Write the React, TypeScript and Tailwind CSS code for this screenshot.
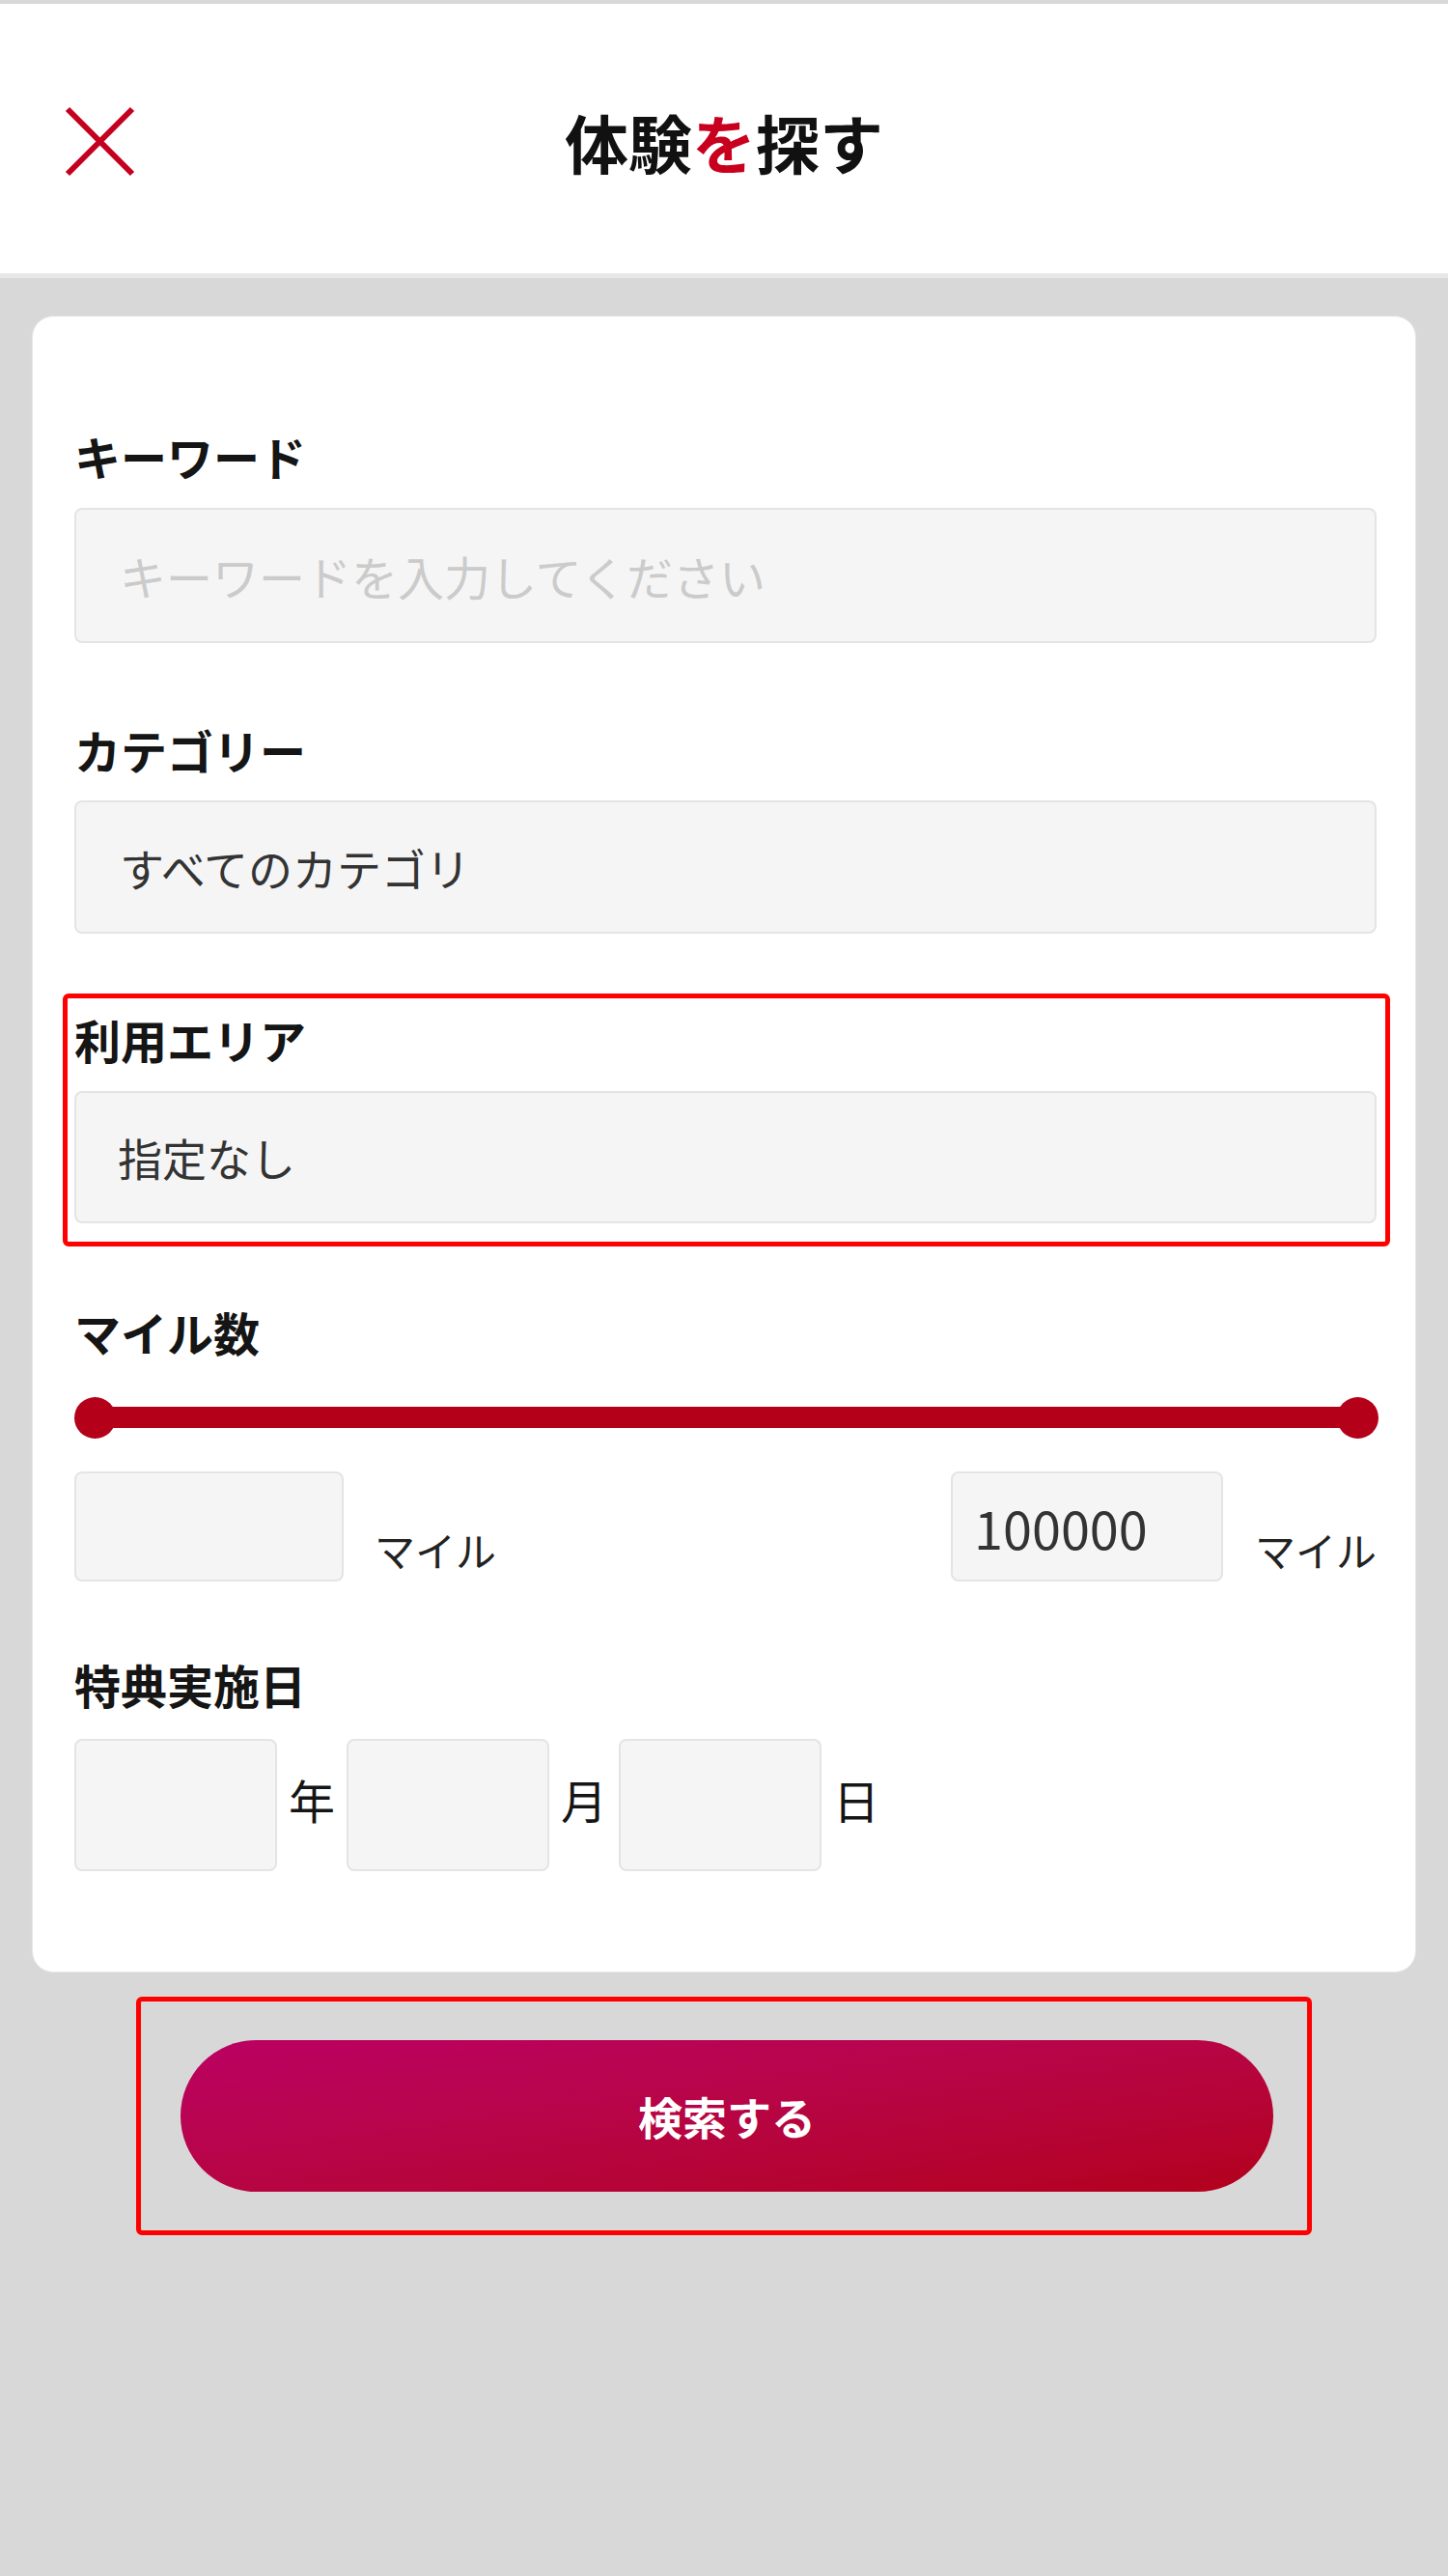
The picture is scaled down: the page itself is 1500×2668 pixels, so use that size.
import { useState } from "react";

const fieldBox =
  "bg-[#f5f5f5] border-2 border-[#e4e4e4] rounded-[8px] outline-none text-[#333] shrink-0";

function Label({ children }: { children: React.ReactNode }) {
  return (
    <div className="h-[60px] leading-[60px] text-[48px] font-bold text-[#151515] whitespace-nowrap">
      {children}
    </div>
  );
}

export default function App() {
  const [keyword, setKeyword] = useState("");
  const [minMile, setMinMile] = useState("");
  const [maxMile, setMaxMile] = useState("100000");

  return (
    <div className="min-h-[2668px] bg-[#d8d8d8] font-['Noto_Sans_CJK_JP','Noto_Sans',sans-serif] pb-[353px]">
      {/* header */}
      <header className="h-[288px] bg-white border-t-4 border-t-[#d8d8d8] border-b-[5px] border-b-[#e8e8e8] pt-[5px] grid grid-cols-[1fr_auto_1fr] items-center">
        <div>
          <button className="ml-[67px] w-[73px] h-[73px] flex" aria-label="閉じる">
            <svg viewBox="0 0 73 73" width="73" height="73">
              <path d="M3 3 L70 70 M70 3 L3 70" stroke="#c4001e" strokeWidth="6" fill="none" />
            </svg>
          </button>
        </div>
        <h1 className="text-[66px] leading-none font-bold text-[#111]">
          体験<span className="text-[#c8001e]">を</span>探す
        </h1>
        <div />
      </header>

      {/* form card */}
      <div className="mt-[39px] mx-[33px] rounded-[22px] bg-white border border-[#e6e6e6] pt-[114px] pl-[43px] pr-[40px] pb-[104px]">
        <Label>キーワード</Label>
        <input
          value={keyword}
          onChange={(e) => setKeyword(e.target.value)}
          placeholder="キーワードを入力してください"
          className={`${fieldBox} block w-full mt-[24px] h-[140px] pl-[45px] text-[48px] placeholder:text-[#cbcbcb]`}
        />

        <div className="mt-[80px]">
          <Label>カテゴリー</Label>
        </div>
        <select
          className={`${fieldBox} block w-full appearance-none mt-[23px] h-[138px] pl-[45px] text-[46px]`}
          defaultValue="all"
        >
          <option value="all">すべてのカテゴリ</option>
        </select>

        {/* highlighted area block */}
        <div className="mt-[62px] ml-[-12px] mr-[-14px] border-[5px] border-[#ff0000] rounded-[6px] pl-[7px] pr-[9px] pt-[12px] pb-[19px]">
          <Label>利用エリア</Label>
          <select
            className={`${fieldBox} block w-full appearance-none mt-[24px] h-[137px] pl-[43px] text-[46px]`}
            defaultValue="none"
          >
            <option value="none">指定なし</option>
          </select>
        </div>

        <div className="mt-[58px]">
          <Label>マイル数</Label>
        </div>

        {/* range slider */}
        <div className="mt-[37px] h-[44px] flex items-center">
          <div className="w-[43px] h-[43px] rounded-full bg-[#b5001a] shrink-0 z-10" />
          <div className="flex-1 h-[22px] bg-[#b5001a] -mx-[4px]" />
          <div className="w-[43px] h-[43px] rounded-full bg-[#b5001a] shrink-0 mr-[-2px] z-10" />
        </div>

        <div className="mt-[34px] flex justify-between">
          <div className="flex items-end">
            <input
              value={minMile}
              onChange={(e) => setMinMile(e.target.value)}
              className={`${fieldBox} w-[279px] h-[114px] pl-[22px] text-[54px]`}
            />
            <span className="ml-[32px] mb-[8px] text-[42px] leading-[50px] text-[#222] whitespace-nowrap">マイル</span>
          </div>
          <div className="flex items-end">
            <input
              value={maxMile}
              onChange={(e) => setMaxMile(e.target.value)}
              className={`${fieldBox} w-[282px] h-[114px] pl-[22px] text-[54px] text-[#222]`}
            />
            <span className="ml-[33px] mb-[8px] text-[42px] leading-[50px] text-[#222] whitespace-nowrap">マイル</span>
          </div>
        </div>

        <div className="mt-[76px]">
          <Label>特典実施日</Label>
        </div>
        <div className="mt-[27px] flex items-center gap-[12px]">
          <input className={`${fieldBox} w-[210px] h-[137px] px-[16px] text-[48px]`} />
          <span className="text-[48px] leading-[60px] pb-[14px] text-[#151515]">年</span>
          <input className={`${fieldBox} w-[210px] h-[137px] px-[16px] text-[48px]`} />
          <span className="text-[48px] leading-[60px] pb-[14px] text-[#151515]">月</span>
          <input className={`${fieldBox} w-[210px] h-[137px] px-[16px] text-[48px]`} />
          <span className="text-[48px] leading-[60px] pb-[14px] text-[#151515]">日</span>
        </div>
      </div>

      {/* search button */}
      <div className="mt-[25px] ml-[141px] w-[1218px] border-[5px] border-[#ff0000] rounded-[6px] py-[40px]">
        <button className="block ml-[41px] w-[1132px] h-[157px] rounded-full bg-linear-to-br from-[#bb0062] to-[#b3001a] text-white text-[46px] font-bold">
          検索する
        </button>
      </div>
    </div>
  );
}
